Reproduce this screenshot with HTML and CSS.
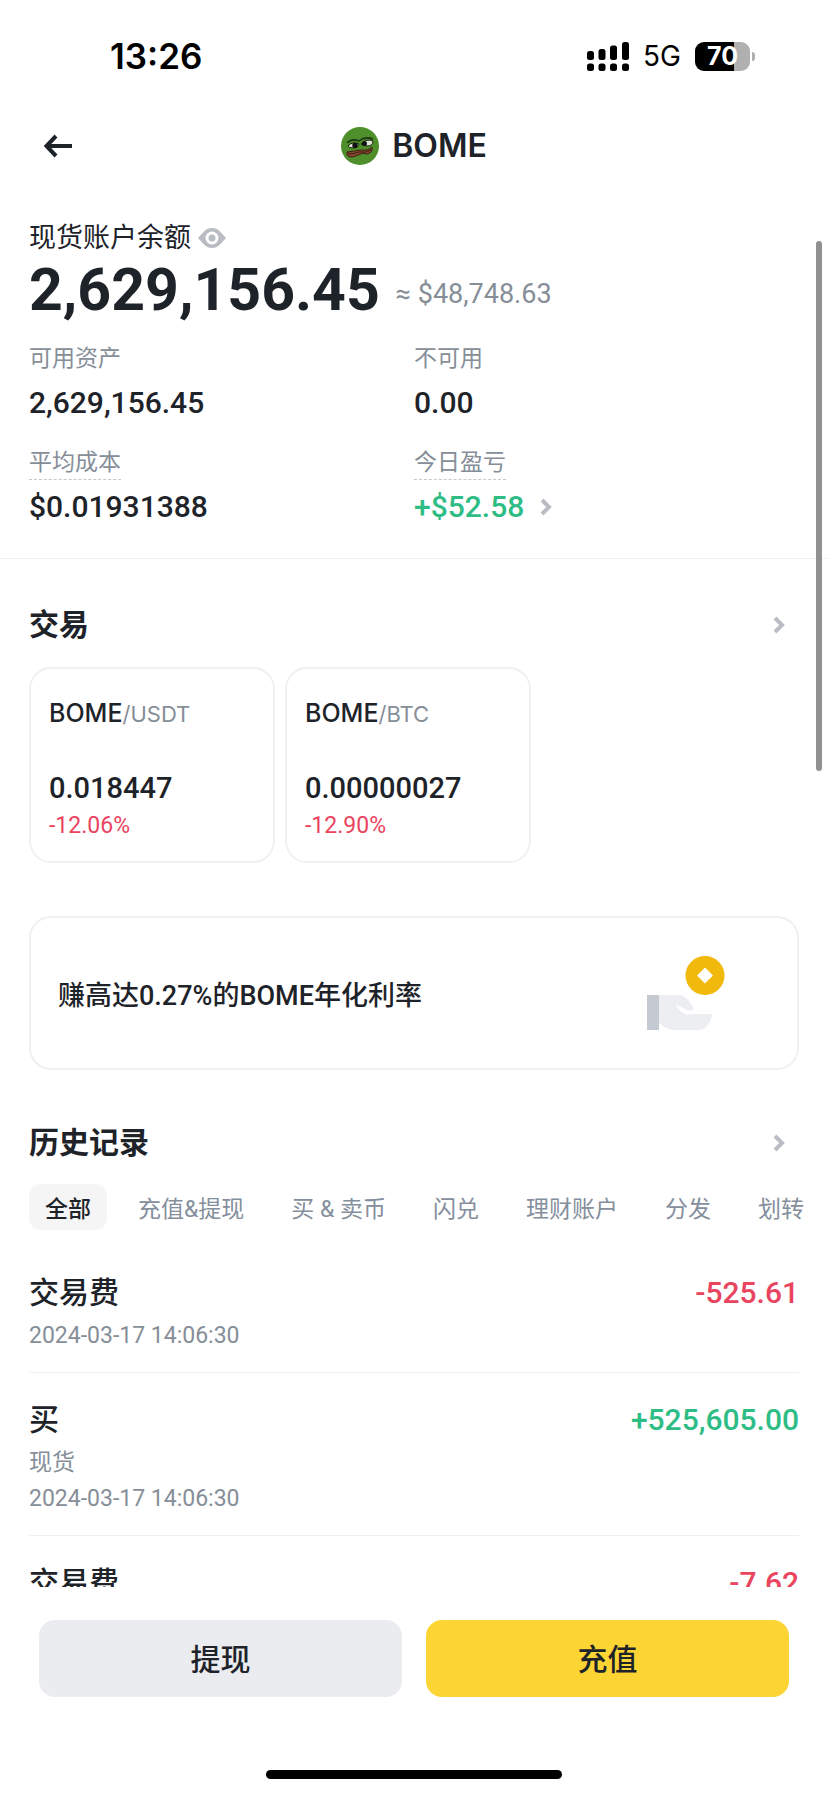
FILE: index.html
```html
<!DOCTYPE html>
<html lang="zh-CN">
<head>
<meta charset="utf-8">
<meta name="viewport" content="width=device-width, initial-scale=1">
<title>BOME</title>
<link rel="stylesheet" href="styles.css">
</head>
<body>
<div class="app">
  <div class="status">
    <span class="clock">13:26</span>
    <div class="status-right">
      <svg class="signal" viewBox="0 0 42 29" aria-hidden="true">
        <rect x="0" y="9" width="7" height="9" rx="2.5"/><rect x="11.5" y="7" width="7" height="11" rx="2.5"/><rect x="23" y="3.5" width="7" height="14.5" rx="2.5"/><rect x="35" y="0" width="7" height="18" rx="2.5"/>
        <rect x="0" y="21.5" width="7" height="7.5" rx="2.5"/><rect x="11.5" y="21.5" width="7" height="7.5" rx="2.5"/><rect x="23" y="21.5" width="7" height="7.5" rx="2.5"/><rect x="35" y="21.5" width="7" height="7.5" rx="2.5"/>
      </svg>
      <span class="network">5G</span>
      <div class="battery"><span class="battery-level">70</span><span class="battery-tip"></span></div>
    </div>
  </div>

  <header class="header">
    <button class="back" type="button" aria-label="返回">
      <svg viewBox="0 0 30 24"><path d="M13 2 L3.5 12 L13 22 M4 12 H29" fill="none" stroke="#1e2329" stroke-width="4"/></svg>
    </button>
    <h1 class="title">
      <svg class="coin" viewBox="0 0 38 38" aria-hidden="true">
        <circle cx="19" cy="19" r="19" fill="#4f8f2b"/>
        <path d="M6 16 Q11 11 18 14 Q24 9 32 12" fill="none" stroke="#1d3511" stroke-width="1.5"/>
        <path d="M7 19 Q11 14 18 17 Q17 21 12 21 Q8 21 7 19Z" fill="#dfe6d8" stroke="#16240f"/>
        <path d="M20 17 Q26 11 32 14 Q32 19 26 19 Q22 19 20 17Z" fill="#dfe6d8" stroke="#16240f"/>
        <circle cx="14" cy="18.5" r="2.7" fill="#111"/><circle cx="23.5" cy="16.5" r="2.5" fill="#111"/>
        <path d="M6 25 Q14 24 20 23 Q27 24 31 20 Q32 26 26 27 Q22 25 17 28 Q9 32 6 28Z" fill="#8a4630" stroke="#3a2113"/>
        <path d="M7 27 Q13 27 18 25 Q25 26 30 23" fill="none" stroke="#3a2113"/>
      </svg>
      BOME
    </h1>
  </header>

  <main class="content">
    <section class="balance">
      <div class="balance-label">现货账户余额
        <button class="eye" type="button" aria-label="隐藏余额">
          <svg viewBox="0 0 28 20"><path fill="#b7bdc3" fill-rule="evenodd" d="M0 10 L6.5 3 Q9.5 0 14 0 Q18.5 0 21.5 3 L28 10 L21.5 17 Q18.5 20 14 20 Q9.5 20 6.5 17Z M14 3.5 A6.5 6.5 0 1 0 14 16.5 A6.5 6.5 0 1 0 14 3.5Z"/><circle cx="14" cy="10" r="3.5" fill="#b7bdc3"/></svg>
        </button>
      </div>
      <div class="balance-total"><strong class="amount">2,629,156.45</strong><span class="approx">≈ $48,748.63</span></div>
      <dl class="stats">
        <div class="stat"><dt>可用资产</dt><dd>2,629,156.45</dd></div>
        <div class="stat"><dt>不可用</dt><dd>0.00</dd></div>
        <div class="stat"><dt><span class="hint">平均成本</span></dt><dd>$0.01931388</dd></div>
        <div class="stat"><dt><span class="hint">今日盈亏</span></dt><dd><a class="pnl up" href="#pnl">+$52.58
          <svg class="chevron" viewBox="0 0 12 18"><path d="M2 2 L9 9 L2 16"/></svg></a></dd></div>
      </dl>
    </section>

    <section class="trade">
      <a class="section-head" href="#trade"><h2>交易</h2><svg class="chevron" viewBox="0 0 12 18"><path d="M2 2 L9 9 L2 16"/></svg></a>
      <div class="pairs">
        <a class="pair" href="#usdt"><span class="pair-name"><b>BOME</b>/USDT</span><span class="price">0.018447</span><span class="change down">-12.06%</span></a>
        <a class="pair" href="#btc"><span class="pair-name"><b>BOME</b>/BTC</span><span class="price">0.00000027</span><span class="change down">-12.90%</span></a>
      </div>
    </section>

    <a class="promo" href="#earn">
      <span>赚高达0.27%的BOME年化利率</span>
      <svg class="earn" viewBox="0 0 78 74" aria-hidden="true">
        <circle cx="58" cy="19.5" r="19.5" fill="#f0b90b"/>
        <path d="M58 11.5 L66 19.5 L58 27.5 L50 19.5Z" fill="#fff"/>
        <path d="M0 39 H12 V74 H0Z" fill="#c5cad2"/>
        <path d="M12 39 H33 Q38 40 42 45 L46 51 Q47 54 44 55 Q41 55 38 53 L30 49 Q34 55 41 58 H65 Q65 64 60 70 Q57 74 51 74 H26 Q19 73 12 67Z" fill="#eceef2"/>
        <path d="M30 49 Q34 56 41 58" fill="none" stroke="#fff" stroke-width="2"/>
      </svg>
    </a>

    <section class="history">
      <a class="section-head" href="#history"><h2>历史记录</h2><svg class="chevron" viewBox="0 0 12 18"><path d="M2 2 L9 9 L2 16"/></svg></a>
      <nav class="tabs">
        <button class="tab active" type="button">全部</button><button class="tab" type="button">充值&amp;提现</button><button class="tab" type="button">买 &amp; 卖币</button><button class="tab" type="button">闪兑</button><button class="tab" type="button">理财账户</button><button class="tab" type="button">分发</button><button class="tab" type="button">划转</button>
      </nav>
      <ul class="records">
        <li class="record"><div><h3>交易费</h3><p class="time">2024-03-17 14:06:30</p></div><span class="delta down">-525.61</span></li>
        <li class="record"><div><h3>买</h3><p class="kind">现货</p><p class="time">2024-03-17 14:06:30</p></div><span class="delta up">+525,605.00</span></li>
        <li class="record"><div><h3>交易费</h3></div><span class="delta down">-7.62</span></li>
      </ul>
    </section>
  </main>

  <footer class="footer">
    <div class="actions">
      <button class="action" type="button">提现</button>
      <button class="action primary" type="button">充值</button>
    </div>
    <div class="home-bar"></div>
  </footer>
  <div class="scrollbar"></div>
</div>
</body>
</html>
```
FILE: styles.css
```css
* { box-sizing: border-box; margin: 0; padding: 0; }
body {
  background: #fff;
  color: #1e2329;
  font-family: Roboto, "Noto Sans CJK SC", sans-serif;
}
button { border: 0; background: none; font: inherit; color: inherit; }
a { color: inherit; text-decoration: none; }
svg { display: block; }
ul { list-style: none; }

.app { position: relative; height: 100vh; display: flex; flex-direction: column; overflow: hidden; }

.status {
  display: flex; justify-content: space-between; align-items: center;
  height: 112px; padding: 0 78px 0 110px;
  font-family: Inter, sans-serif; color: #000;
}
.clock { font-size: 35px; font-weight: 600; }
.status-right { display: flex; align-items: center; }
.signal { width: 42px; height: 29px; }
.network { font-size: 28px; margin: 0 14px; }
.battery {
  position: relative; width: 55px; height: 29px; border-radius: 9px;
  background: linear-gradient(90deg, #000 70%, #b0b0b0 70%);
  text-align: center;
}
.battery-level { font-size: 25px; line-height: 29px; font-weight: 700; color: #fff; }
.battery-tip { position: absolute; right: -5px; top: 10px; width: 3px; height: 9px; border-radius: 0 3px 3px 0; background: #b0b0b0; }

.header { display: grid; grid-template-columns: 1fr auto 1fr; align-items: center; height: 68px; padding: 0 43px; }
.back { justify-self: start; }
.back svg { width: 30px; height: 24px; }
.title { display: flex; align-items: center; gap: 13px; font: 600 32px/40px Inter, sans-serif; }
.coin { width: 38px; height: 38px; }

.content { flex: 1; min-height: 0; overflow: hidden; padding-top: 40px; }
.balance { padding: 0 29px 29px; border-bottom: 1px solid #eef0f2; }
.balance-label { display: flex; align-items: center; gap: 7px; font-size: 27px; line-height: 36px; }
.eye svg { width: 28px; height: 20px; }
.balance-total { display: flex; align-items: center; gap: 16px; height: 68px; margin-bottom: 17px; line-height: 68px; }
.amount { font-size: 59px; font-weight: 700; }
.approx { padding-top: 8px; font-size: 27px; color: #868e98; }
.stats { display: grid; grid-template-columns: 1fr 1fr; row-gap: 20px; }
.stat dt { height: 40px; font-size: 23px; line-height: 36px; color: #868e98; }
.hint { display: inline-block; line-height: 32px; border-bottom: 1px dashed #c4c9d0; }
.stat dd { font-size: 30px; line-height: 44px; font-weight: 500; }
.pnl { display: inline-flex; align-items: center; gap: 16px; }
.up { color: #2ebd85; }
.down { color: #e9455f; }
.stat .up { color: #2ebd85; }
.chevron { width: 12px; height: 18px; fill: none; stroke: #b7bdc3; stroke-width: 4; }

.trade { padding: 44px 29px 0; }
.section-head { display: flex; align-items: center; justify-content: space-between; padding-right: 14px; line-height: 44px; }
.section-head h2 { font-size: 30px; font-weight: 700; }
.pairs { display: flex; gap: 10px; margin-top: 20px; }
.pair { display: flex; flex-direction: column; width: 246px; padding: 26px 18px 17px; border: 2px solid #eef0f1; border-radius: 22px; }
.pair-name { font: 400 22px/36px Inter, sans-serif; color: #868e98; }
.pair-name b { font-size: 25px; font-weight: 500; color: #1e2329; }
.price { margin-top: 36px; font-size: 29px; line-height: 40px; font-weight: 500; }
.change { font-size: 23px; line-height: 36px; }

.promo {
  display: flex; align-items: center; justify-content: space-between;
  margin: 53px 29px 0; padding: 38px 72px 38px 27px;
  border: 2px solid #eef0f1; border-radius: 22px;
  font-size: 27px; font-weight: 500;
}
.earn { width: 78px; height: 74px; }

.history { padding: 51px 29px 0; }
.tabs { display: flex; gap: 15px; margin: 19px -29px 0 0; overflow: hidden; }
.tab { flex: none; padding: 0 16px; height: 46px; border-radius: 12px; font-size: 23px; font-weight: 400; color: #848e9c; }
.tab.active { background: #f5f5f5; color: #1e2329; font-weight: 500; }
.records { padding-top: 16px; }
.record { display: flex; justify-content: space-between; padding: 25px 0 18px; border-bottom: 1px solid #eef0f2; }
.record h3 { margin-bottom: 3px; font-size: 30px; line-height: 44px; font-weight: 500; }
.kind, .time { font-size: 23px; line-height: 36px; color: #868e98; }
.delta { font-size: 30px; line-height: 44px; font-weight: 500; }

.footer { padding: 33px 39px 16px; background: #fff; }
.actions { display: grid; grid-template-columns: 1fr 1fr; gap: 24px; }
.action { height: 77px; padding-bottom: 4px; border-radius: 16px; background: #eaecef; font-size: 30px; font-weight: 500; }
.action.primary { background: #fcd535; }
.home-bar { width: 296px; height: 9px; margin: 73px auto 0; border-radius: 5px; background: #000; }
.scrollbar { position: absolute; right: 6px; top: 241px; width: 6px; height: 530px; border-radius: 3px; background: #919191; }
```
